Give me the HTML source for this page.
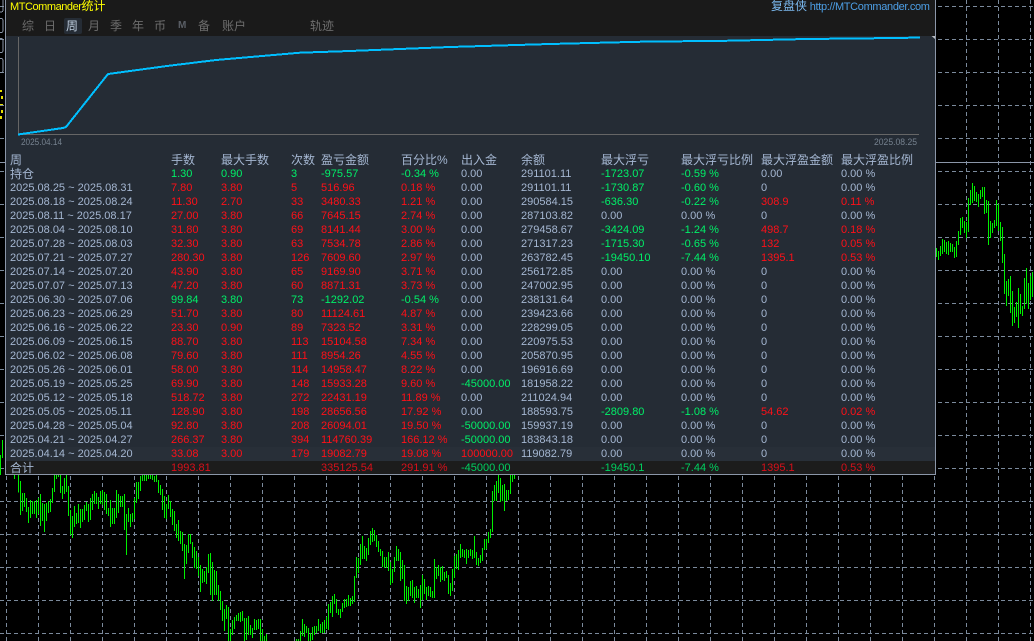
<!DOCTYPE html>
<html><head><meta charset="utf-8"><style>
html,body{margin:0;padding:0;background:#000;width:1034px;height:641px;overflow:hidden}
body{position:relative;font-family:"Liberation Sans","WenQuanYi Zen Hei",sans-serif;font-size:11px;color:#a5b7d2}
svg.bg{position:absolute;left:0;top:0}
#p{position:absolute;left:5px;top:-1px;width:929px;height:474px;background:#252c35;border:1px solid #8b96a8;overflow:hidden}
#h{position:absolute;left:0;top:0;width:100%;height:36px;background:#1a1a1a}
.a{position:absolute;white-space:nowrap}
.t{position:absolute;top:19px;font-size:12px;line-height:14px;color:#6d6d6d}
#c{position:absolute;left:-6px;top:153px;width:941px}
.w{position:relative;height:14px;line-height:14px;white-space:nowrap}
.w span{position:absolute;top:0}
.w span:nth-child(1){left:10px}.w span:nth-child(2){left:171px}.w span:nth-child(3){left:221px}
.w span:nth-child(4){left:291px}.w span:nth-child(5){left:321px}.w span:nth-child(6){left:401px}
.w span:nth-child(7){left:461px}.w span:nth-child(8){left:521px}.w span:nth-child(9){left:601px}
.w span:nth-child(10){left:681px}.w span:nth-child(11){left:761px}.w span:nth-child(12){left:841px}
.k span{font-size:12px;color:#a5b7d2}
.r{color:#ff1018}.g{color:#00f068}
.w.tot{background:#1c1c1c}.w.tot .r{color:#d8101a}.w.tot .g{color:#00d060}
</style></head><body>
<svg class="bg" width="1034" height="641" viewBox="0 0 1034 641">
<g stroke="#7b8a9c" stroke-width="1" stroke-dasharray="4 3" fill="none" shape-rendering="crispEdges">
<path d="M0 6.5H1034M0 39.5H1034M0 72.5H1034M0 105.5H1034M0 138.5H1034M0 171.5H1034M0 204.5H1034M0 237.5H1034M0 270.5H1034M0 303.5H1034M0 336.5H1034M0 369.5H1034M0 402.5H1034M0 435.5H1034M0 468.5H1034M0 501.5H1034M0 534.5H1034M0 567.5H1034M0 600.5H1034M0 633.5H1034"/>
<path d="M6.5 0V641M38.5 0V641M70.5 0V641M102.5 0V641M134.5 0V641M166.5 0V641M198.5 0V641M230.5 0V641M262.5 0V641M294.5 0V641M326.5 0V641M358.5 0V641M390.5 0V641M422.5 0V641M454.5 0V641M486.5 0V641M518.5 0V641M550.5 0V641M582.5 0V641M614.5 0V641M646.5 0V641M678.5 0V641M710.5 0V641M742.5 0V641M774.5 0V641M806.5 0V641M838.5 0V641M870.5 0V641M902.5 0V641M934.5 0V641M966.5 0V641M998.5 0V641M1030.5 0V641"/>
</g>
<path d="M0 162.5H1034" stroke="#8b96a8" shape-rendering="crispEdges"/>
<g stroke="#00f000" fill="none" stroke-width="3" shape-rendering="crispEdges">
<path d="M.5 455V475M2.5 440V458" stroke-width="1"/>
<path transform="translate(.17,470) scale(.3333)" d="M43 14V27M55 14V68M61 33V135M67 69V123M73 69V111M79 84V126M85 111V159M91 90V144M97 93V132M103 93V132M109 90V144M115 84V132M121 72V168M127 99V153M133 102V186M139 99V153M145 93V129M151 87V126M157 54V99M163 14V66M169 14V27M175 14V21M181 14V69M187 48V87M193 24V72M199 14V66M205 48V138M211 120V195M217 138V204M223 108V171M229 129V162M235 102V159M241 117V174M247 117V156M253 105V150M259 96V123M265 102V156M271 84V150M277 72V120M283 63V102M289 69V102M295 81V117M301 63V102M307 60V105M313 66V120M319 72V132M325 114V138M331 90V171M337 114V162M343 114V162M349 60V144M355 72V129M361 78V111M367 78V111M373 72V180M379 132V255M385 114V156M391 132V171M397 129V156M403 84V147M409 36V99M415 36V87M421 18V63M427 14V33M433 14V33M439 14V33M445 14V27M451 14V27M457 14V30M463 18V36M469 14V36M475 30V69M481 45V75M487 57V120M493 78V144M499 102V147M505 75V117M511 93V141M517 117V165M523 123V183M529 162V204M535 150V213M541 183V222M547 186V243M553 222V327M559 225V282M565 192V249M571 192V222M577 216V264M583 231V294M589 243V297M595 261V318"/>
<path transform="translate(200.17,470) scale(.3333)" d="M1 285V366M7 297V339M13 303V336M19 291V342M25 252V309M31 249V375M37 276V393M43 300V375M49 303V375M55 345V393M61 363V420M67 393V453M73 417V483M79 405V447M85 411V513M91 477V513M97 450V495M103 441V477M109 435V453M115 429V453M121 426V456M127 423V453M133 444V513M139 444V510M145 438V495M151 465V495M157 474V504M163 447V480M169 450V480M175 447V477M181 447V513M187 477V513M193 498V513M199 492V513M289 507V513M295 507V513M301 483V513M307 447V498M313 462V501M319 468V489M325 474V513M331 489V513M337 471V510M343 468V495M349 468V489M355 447V483M361 462V489M367 456V489M373 450V489M379 441V477M385 402V480M391 396V429M397 378V441M403 372V402M409 387V429M415 417V435M421 417V444M427 399V426M433 387V414M439 387V411M445 375V408M451 384V408M457 378V402M463 318V396M469 261V324M475 264V309M481 222V285M487 198V267M493 228V267M499 234V273M505 204V255M511 183V225M517 174V216M523 180V213M529 195V231M535 213V246M541 237V258M547 243V291M553 261V294M559 261V294M565 246V303M571 276V345M577 297V339M583 261V306M589 228V273M595 237V273"/>
<path transform="translate(380.17,470) scale(.3333)" d="M61 246V333M67 270V327M73 285V393M79 348V402M85 351V393M91 333V378M97 330V384M103 351V399M109 348V384M115 357V384M121 345V414M127 315V390M133 327V372M139 351V390M145 348V378M151 351V381M157 363V384M163 267V384M169 291V327M175 285V318M181 291V336M187 288V330M193 306V333M199 303V324M205 315V372M211 339V378M217 297V363M223 258V324M229 252V297M235 240V300M241 222V264M247 237V261M253 240V264M259 237V282M265 240V264M271 237V258M277 240V267M283 198V264M289 246V285M295 264V288M301 255V279M307 234V273M313 207V240M319 207V237M325 186V219M331 177V204M337 63V186M343 45V93M349 33V93M355 14V69M361 24V96M367 45V93M373 42V123M379 60V93M385 60V90M391 14V72M397 14V36M403 14V27"/>
<path transform="translate(930.17,150) scale(.3333)" d="M19 294V321M25 303V330M31 288V318M37 267V312M43 270V306M49 276V312M55 273V315M61 279V306M67 282V306M73 291V324M79 273V321M85 243V285M91 204V255M97 201V234M103 213V249M109 216V264M115 144V246M121 120V165M127 99V159M133 108V153M139 126V156M145 132V171M151 120V147M157 111V141M163 111V192M169 150V189M175 153V285M181 213V264M187 219V249M193 210V234M199 150V228M205 162V243M211 216V273M217 231V339M223 312V432M229 393V468M235 387V438M241 378V489M247 423V528M253 471V519M259 456V501M265 414V534M271 432V492M277 468V498M283 384V477M289 354V462M295 399V477M301 378V450M307 366V441"/>
</g>
<g fill="none" stroke="#8b96a8" shape-rendering="crispEdges">
<rect x="-6" y="-4" width="9" height="16" rx="2"/>
<rect x="-6" y="18.500" width="9" height="14" rx="2"/>
<rect x="-6" y="38.500" width="9" height="14" rx="2"/>
<rect x="-6" y="58.500" width="9" height="14" rx="2"/>
</g>
<path d="M0 90h2v2h-2zM1 96h2v3h-2zM0 104h3v1h-3zM1 110h2v3h-2zM0 116h2v3h-2z" fill="#e8e000"/>
</svg>
<div id="p">
<div id="h"></div>
<div class="a" style="left:4px;top:-1px;line-height:14px;color:#ffff00;font-size:11px;letter-spacing:-.45px">MTCommander<span style="font-size:12px;letter-spacing:0">统计</span></div>
<div class="a" style="left:765px;top:-1px;line-height:14px;color:#4d9fe6;font-size:11px;letter-spacing:-.33px"><span style="font-size:12px;color:#7ab8ee;letter-spacing:0">复盘侠</span> http://MTCommander.com</div>
<div class="a" style="left:58px;top:18px;width:18px;height:16px;background:#252c35;border-radius:2px"></div>
<div class="t" style="left:16px">综</div><div class="t" style="left:38px">日</div>
<div class="t" style="left:60px;color:#c0cfe0">周</div><div class="t" style="left:82px">月</div>
<div class="t" style="left:104px">季</div><div class="t" style="left:126px">年</div>
<div class="t" style="left:148px">币</div><div class="t" style="left:172px;font-size:10px;font-weight:bold;color:#5a5f66">M</div>
<div class="t" style="left:192px">备</div><div class="t" style="left:216px">账户</div>
<div class="t" style="left:304px">轨迹</div>
<svg class="a" style="left:0;top:36px" width="929" height="112" viewBox="6 36 929 112">
<path d="M18.500 37V134.500H919" fill="none" stroke="#666" shape-rendering="crispEdges"/>
<path d="M18 134.500L63 128L66 127L108 74L167 66L216 60L300 52.700L350 51L450 47L550 44L650 41.500L716 41L762 40L807 39L897 38L920 37.500" fill="none" stroke="#00bfff" stroke-width="2" shape-rendering="crispEdges"/>
<path d="M935 32L931 35.500L935 39z" fill="#b8bcc2"/>
<text x="21" y="145" font-size="9" textLength="41" lengthAdjust="spacingAndGlyphs" fill="#76828f" font-family="Liberation Sans">2025.04.14</text>
<text x="874" y="145" font-size="9" textLength="43" lengthAdjust="spacingAndGlyphs" fill="#76828f" font-family="Liberation Sans">2025.08.25</text>
</svg>
<div id="c">
<div class="w k"><span>周</span><span>手数</span><span>最大手数</span><span>次数</span><span>盈亏金额</span><span>百分比%</span><span>出入金</span><span>余额</span><span>最大浮亏</span><span>最大浮亏比例</span><span>最大浮盈金额</span><span>最大浮盈比例</span></div>
<div class="w"><span style="font-size:12px">持仓</span><span class="g">1.30</span><span class="g">0.90</span><span class="g">3</span><span class="g">-975.57</span><span class="g">-0.34 %</span><span>0.00</span><span>291101.11</span><span class="g">-1723.07</span><span class="g">-0.59 %</span><span>0.00</span><span>0.00 %</span></div>
<div class="w"><span>2025.08.25 ~ 2025.08.31</span><span class="r">7.80</span><span class="r">3.80</span><span class="r">5</span><span class="r">516.96</span><span class="r">0.18 %</span><span>0.00</span><span>291101.11</span><span class="g">-1730.87</span><span class="g">-0.60 %</span><span>0</span><span>0.00 %</span></div>
<div class="w"><span>2025.08.18 ~ 2025.08.24</span><span class="r">11.30</span><span class="r">2.70</span><span class="r">33</span><span class="r">3480.33</span><span class="r">1.21 %</span><span>0.00</span><span>290584.15</span><span class="g">-636.30</span><span class="g">-0.22 %</span><span class="r">308.9</span><span class="r">0.11 %</span></div>
<div class="w"><span>2025.08.11 ~ 2025.08.17</span><span class="r">27.00</span><span class="r">3.80</span><span class="r">66</span><span class="r">7645.15</span><span class="r">2.74 %</span><span>0.00</span><span>287103.82</span><span>0.00</span><span>0.00 %</span><span>0</span><span>0.00 %</span></div>
<div class="w"><span>2025.08.04 ~ 2025.08.10</span><span class="r">31.80</span><span class="r">3.80</span><span class="r">69</span><span class="r">8141.44</span><span class="r">3.00 %</span><span>0.00</span><span>279458.67</span><span class="g">-3424.09</span><span class="g">-1.24 %</span><span class="r">498.7</span><span class="r">0.18 %</span></div>
<div class="w"><span>2025.07.28 ~ 2025.08.03</span><span class="r">32.30</span><span class="r">3.80</span><span class="r">63</span><span class="r">7534.78</span><span class="r">2.86 %</span><span>0.00</span><span>271317.23</span><span class="g">-1715.30</span><span class="g">-0.65 %</span><span class="r">132</span><span class="r">0.05 %</span></div>
<div class="w"><span>2025.07.21 ~ 2025.07.27</span><span class="r">280.30</span><span class="r">3.80</span><span class="r">126</span><span class="r">7609.60</span><span class="r">2.97 %</span><span>0.00</span><span>263782.45</span><span class="g">-19450.10</span><span class="g">-7.44 %</span><span class="r">1395.1</span><span class="r">0.53 %</span></div>
<div class="w"><span>2025.07.14 ~ 2025.07.20</span><span class="r">43.90</span><span class="r">3.80</span><span class="r">65</span><span class="r">9169.90</span><span class="r">3.71 %</span><span>0.00</span><span>256172.85</span><span>0.00</span><span>0.00 %</span><span>0</span><span>0.00 %</span></div>
<div class="w"><span>2025.07.07 ~ 2025.07.13</span><span class="r">47.20</span><span class="r">3.80</span><span class="r">60</span><span class="r">8871.31</span><span class="r">3.73 %</span><span>0.00</span><span>247002.95</span><span>0.00</span><span>0.00 %</span><span>0</span><span>0.00 %</span></div>
<div class="w"><span>2025.06.30 ~ 2025.07.06</span><span class="g">99.84</span><span class="g">3.80</span><span class="g">73</span><span class="g">-1292.02</span><span class="g">-0.54 %</span><span>0.00</span><span>238131.64</span><span>0.00</span><span>0.00 %</span><span>0</span><span>0.00 %</span></div>
<div class="w"><span>2025.06.23 ~ 2025.06.29</span><span class="r">51.70</span><span class="r">3.80</span><span class="r">80</span><span class="r">11124.61</span><span class="r">4.87 %</span><span>0.00</span><span>239423.66</span><span>0.00</span><span>0.00 %</span><span>0</span><span>0.00 %</span></div>
<div class="w"><span>2025.06.16 ~ 2025.06.22</span><span class="r">23.30</span><span class="r">0.90</span><span class="r">89</span><span class="r">7323.52</span><span class="r">3.31 %</span><span>0.00</span><span>228299.05</span><span>0.00</span><span>0.00 %</span><span>0</span><span>0.00 %</span></div>
<div class="w"><span>2025.06.09 ~ 2025.06.15</span><span class="r">88.70</span><span class="r">3.80</span><span class="r">113</span><span class="r">15104.58</span><span class="r">7.34 %</span><span>0.00</span><span>220975.53</span><span>0.00</span><span>0.00 %</span><span>0</span><span>0.00 %</span></div>
<div class="w"><span>2025.06.02 ~ 2025.06.08</span><span class="r">79.60</span><span class="r">3.80</span><span class="r">111</span><span class="r">8954.26</span><span class="r">4.55 %</span><span>0.00</span><span>205870.95</span><span>0.00</span><span>0.00 %</span><span>0</span><span>0.00 %</span></div>
<div class="w"><span>2025.05.26 ~ 2025.06.01</span><span class="r">58.00</span><span class="r">3.80</span><span class="r">114</span><span class="r">14958.47</span><span class="r">8.22 %</span><span>0.00</span><span>196916.69</span><span>0.00</span><span>0.00 %</span><span>0</span><span>0.00 %</span></div>
<div class="w"><span>2025.05.19 ~ 2025.05.25</span><span class="r">69.90</span><span class="r">3.80</span><span class="r">148</span><span class="r">15933.28</span><span class="r">9.60 %</span><span class="g">-45000.00</span><span>181958.22</span><span>0.00</span><span>0.00 %</span><span>0</span><span>0.00 %</span></div>
<div class="w"><span>2025.05.12 ~ 2025.05.18</span><span class="r">518.72</span><span class="r">3.80</span><span class="r">272</span><span class="r">22431.19</span><span class="r">11.89 %</span><span>0.00</span><span>211024.94</span><span>0.00</span><span>0.00 %</span><span>0</span><span>0.00 %</span></div>
<div class="w"><span>2025.05.05 ~ 2025.05.11</span><span class="r">128.90</span><span class="r">3.80</span><span class="r">198</span><span class="r">28656.56</span><span class="r">17.92 %</span><span>0.00</span><span>188593.75</span><span class="g">-2809.80</span><span class="g">-1.08 %</span><span class="r">54.62</span><span class="r">0.02 %</span></div>
<div class="w"><span>2025.04.28 ~ 2025.05.04</span><span class="r">92.80</span><span class="r">3.80</span><span class="r">208</span><span class="r">26094.01</span><span class="r">19.50 %</span><span class="g">-50000.00</span><span>159937.19</span><span>0.00</span><span>0.00 %</span><span>0</span><span>0.00 %</span></div>
<div class="w"><span>2025.04.21 ~ 2025.04.27</span><span class="r">266.37</span><span class="r">3.80</span><span class="r">394</span><span class="r">114760.39</span><span class="r">166.12 %</span><span class="g">-50000.00</span><span>183843.18</span><span>0.00</span><span>0.00 %</span><span>0</span><span>0.00 %</span></div>
<div class="w" style="background:#282f38"><span>2025.04.14 ~ 2025.04.20</span><span class="r">33.08</span><span class="r">3.00</span><span class="r">179</span><span class="r">19082.79</span><span class="r">19.08 %</span><span class="r">100000.00</span><span>119082.79</span><span>0.00</span><span>0.00 %</span><span>0</span><span>0.00 %</span></div>
<div class="w tot"><span style="font-size:12px">合计</span><span class="r">1993.81</span><span></span><span></span><span class="r">335125.54</span><span class="r">291.91 %</span><span class="g">-45000.00</span><span></span><span class="g">-19450.1</span><span class="g">-7.44 %</span><span class="r">1395.1</span><span class="r">0.53 %</span></div>
</div>
</div>
</body></html>
